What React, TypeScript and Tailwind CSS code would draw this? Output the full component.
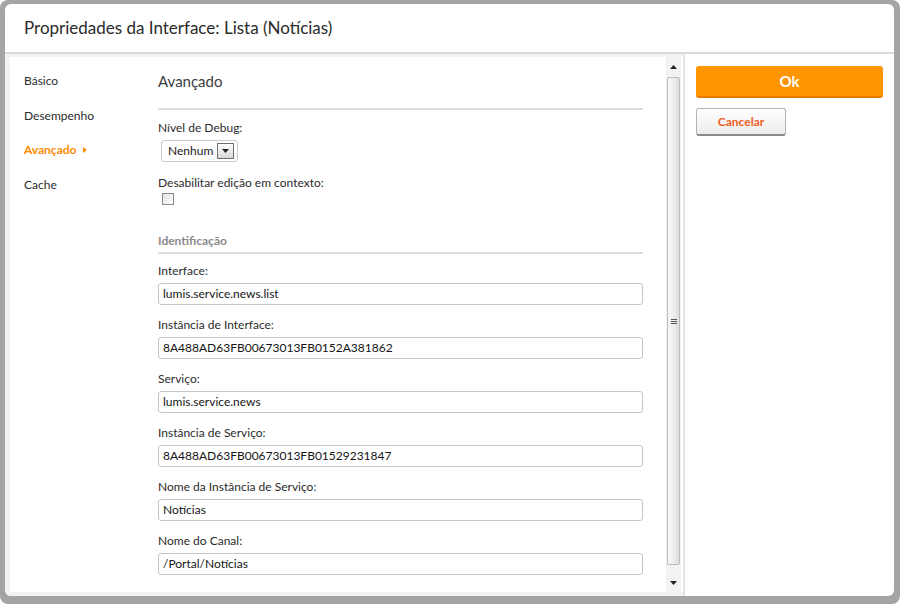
import React from 'react';

const fields = [
  { label: 'Interface:', value: 'lumis.service.news.list' },
  { label: 'Instância de Interface:', value: '8A488AD63FB00673013FB0152A381862' },
  { label: 'Serviço:', value: 'lumis.service.news' },
  { label: 'Instância de Serviço:', value: '8A488AD63FB00673013FB01529231847' },
  { label: 'Nome da Instância de Serviço:', value: 'Notícias' },
  { label: 'Nome do Canal:', value: '/Portal/Notícias' },
];

const navItems = ['Básico', 'Desempenho', 'Avançado', 'Cache'];

function Arrow({ down }: { down?: boolean }) {
  return (
    <svg width="7" height="4" viewBox="0 0 7 4">
      <path d={down ? 'M0 0h7L3.5 4z' : 'M0 4h7L3.5 0z'} fill="#222" />
    </svg>
  );
}

function Scrollbar() {
  return (
    <div className="w-[15px] flex flex-col bg-[#f3f3f3]">
      <div className="h-[20px] flex items-center justify-center">
        <Arrow />
      </div>
      <div className="flex-1 mx-[1px] border border-[#bcbcbc] rounded-[2px] bg-linear-to-r from-[#f8f8f8] via-[#eeeeee] to-[#dcdcdc] flex items-center justify-center">
        <div className="flex flex-col gap-[1px]">
          <div className="w-[6px] h-[1px] bg-[#555]" />
          <div className="w-[6px] h-[1px] bg-[#555]" />
          <div className="w-[6px] h-[1px] bg-[#555]" />
        </div>
      </div>
      <div className="h-[27px] flex items-center justify-center pt-[8px]">
        <Arrow down />
      </div>
    </div>
  );
}

export default function App() {
  return (
    <div className="w-[900px] h-[604px] bg-white">
      <div
        className="w-full h-full rounded-[8px] bg-[#a4a4a4] pt-[4px] pl-[5px] pr-[6px] pb-[8px]"
        style={{ fontFamily: 'Lato, "Open Sans", sans-serif' }}
      >
        <div className="h-full bg-white rounded-[6px] flex flex-col overflow-hidden">
          <div className="h-[50px] shrink-0 flex items-center pl-[19px] text-[17px] text-[#2b2b2b] border-b-2 border-[#dadada]">
            Propriedades da Interface: Lista (Notícias)
          </div>
          <div className="flex flex-1 min-h-0">
            <div className="w-[680px] shrink-0 bg-[#f2f2f2] pl-[5px] pt-[3px] pb-[4px] border-r-2 border-[#e3e3e3] flex">
              <div className="flex-1 bg-white flex">
                <div className="w-[148px] shrink-0 pl-[14px] pt-[16px] flex flex-col gap-[18.5px] text-[12px] leading-[16px] text-[#2b2b2b]">
                  {navItems.map((item) =>
                    item === 'Avançado' ? (
                      <div key={item} className="flex items-center gap-[7px] font-bold text-[#ff8a00]">
                        {item}
                        <svg width="4" height="6" viewBox="0 0 4 6">
                          <path d="M0 0l4 3-4 3z" fill="#ff8a00" />
                        </svg>
                      </div>
                    ) : (
                      <div key={item}>{item}</div>
                    )
                  )}
                </div>
                <div className="w-[485px] shrink-0 mr-[23px] pt-[14px] text-[12px] leading-[16px] text-[#2b2b2b]">
                  <div className="text-[15px] leading-[20px] text-[#3c3c3c]">Avançado</div>
                  <div className="mt-[17px] h-[2px] bg-[#dcdcdc]" />
                  <div className="mt-[10px]">Nível de Debug:</div>
                  <div className="mt-[4px] ml-[3px] w-[77px] h-[22px] border border-[#cbcbcb] rounded-[3px] flex items-center pl-[6px] pr-[3px] text-[#1a1a1a]">
                    <span>Nenhum</span>
                    <div className="ml-auto w-[17px] h-[16px] border border-[#6f6f6f] bg-linear-to-b from-white to-[#d8d8d8] flex items-center justify-center">
                      <Arrow down />
                    </div>
                  </div>
                  <div className="mt-[13px]">Desabilitar edição em contexto:</div>
                  <div className="mt-[2px] ml-[4px] w-[12px] h-[12px] border border-[#8a8a8a] bg-linear-to-br from-[#e2e2e2] to-white" />
                  <div className="mt-[28px] font-bold text-[#8a8a8a]">Identificação</div>
                  <div className="mt-[3px] h-[2px] bg-[#dcdcdc]" />
                  <div className="pt-[9px] flex flex-col gap-[12px]">
                    {fields.map((f) => (
                      <div key={f.label}>
                        <div>{f.label}</div>
                        <div className="mt-[4px] h-[22px] border border-[#c6c6c6] rounded-[3px] flex items-center pl-[4px] text-[#151515]">
                          {f.value}
                        </div>
                      </div>
                    ))}
                  </div>
                </div>
                <Scrollbar />
              </div>
            </div>
            <div className="flex-1 px-[11px] pt-[12px] flex flex-col items-start">
              <button className="w-full h-[32px] rounded-[3px] bg-[#ff9500] border-b-2 border-[#ec7a00] text-white font-bold text-[15px]">
                Ok
              </button>
              <button className="mt-[10px] w-[90px] h-[28px] rounded-[3px] border border-[#b3b3b3] border-b-2 border-b-[#8c8c8c] bg-linear-to-b from-white to-[#ececec] text-[#f0601e] font-bold text-[12px]">
                Cancelar
              </button>
            </div>
          </div>
        </div>
      </div>
    </div>
  );
}
